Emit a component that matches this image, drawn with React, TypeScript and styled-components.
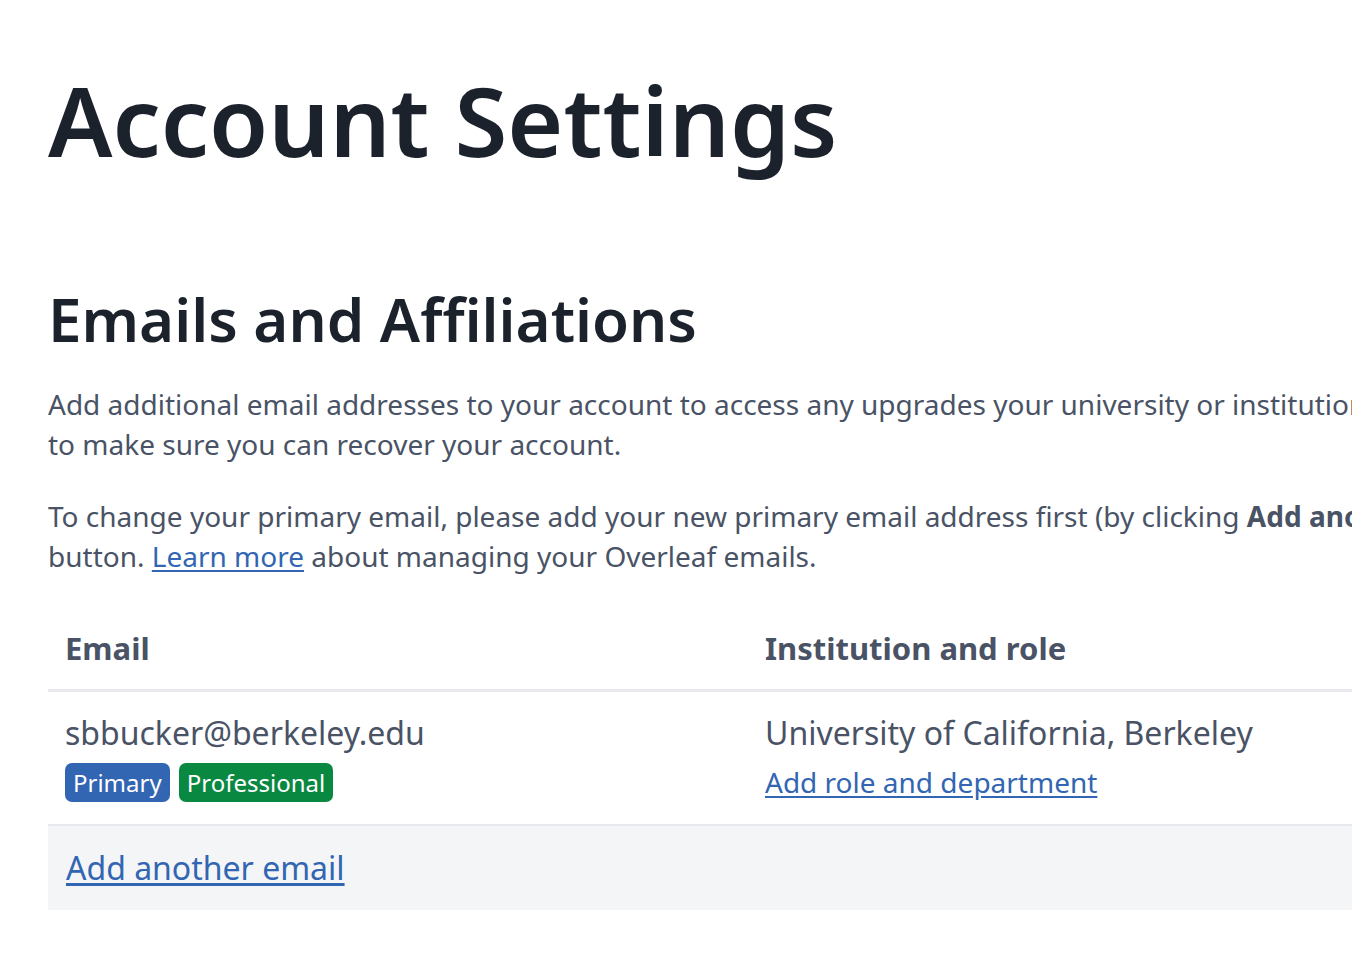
import React from "react";
import styled, { createGlobalStyle } from "styled-components";

const Global = createGlobalStyle`
  html, body { margin: 0; padding: 0; background: #ffffff; overflow: hidden; }
  body { font-family: "Noto Sans", "Open Sans", sans-serif; }
`;

const Page = styled.div`
  width: 2400px;
  padding: 62px 0 0 48px;
  box-sizing: border-box;
  color: #495365;
`;

const Title = styled.h1`
  margin: 0;
  font-size: 96px;
  line-height: 1.2;
  font-weight: 600;
  color: #1b222c;
`;

const SectionTitle = styled.h2`
  margin: 106px 0 0;
  font-size: 60px;
  line-height: 72px;
  font-weight: 600;
  color: #1b222c;
`;

const Paragraph = styled.p`
  margin: 0 0 32px;
  font-size: 28px;
  line-height: 40px;
  color: #495365;
  white-space: nowrap;
  &:first-of-type { margin-top: 29px; }
`;

const Link = styled.a`
  color: #3265b2;
  text-decoration: underline;
  text-underline-offset: 3px;
  cursor: pointer;
`;

const Table = styled.div`
  width: 1900px;
  display: grid;
  grid-template-columns: 700px 1fr;
`;

const HeadCell = styled.div`
  padding: 18px 17px 18px;
  font-size: 31px;
  line-height: 45px;
  font-weight: 700;
  color: #495365;
  border-bottom: 3px solid #e7e9ee;
`;

const Cell = styled.div`
  padding: 18px 17px 22px;
  font-size: 32px;
  line-height: 45px;
  color: #495365;
  border-bottom: 2px solid #e7e9ee;
  display: flex;
  flex-direction: column;
  align-items: flex-start;
  gap: 8px;
`;

const FooterCell = styled.div`
  grid-column: 1 / -1;
  background: #f4f5f6;
  padding: 19px 18px 20px;
  font-size: 32px;
  line-height: 45px;
`;

const Badges = styled.div`
  display: flex;
  gap: 9px;
`;

const Badge = styled.span<{ $tone: "blue" | "green" }>`
  display: inline-flex;
  align-items: center;
  height: 39px;
  padding: 0 8px;
  border-radius: 7px;
  font-size: 24px;
  line-height: 1;
  color: #ffffff;
  background: ${(p) => (p.$tone === "blue" ? "#3265b2" : "#098842")};
`;

const CellLinkLine = styled.div`
  font-size: 28px;
  line-height: 39px;
`;

export default function App() {
  return (
    <>
      <Global />
      <Page>
        <Title>Account Settings</Title>
        <SectionTitle>Emails and Affiliations</SectionTitle>
        <Paragraph>
          Add additional email addresses to your account to access any upgrades your university or institution has, to make it easier for collaborators to find you, and
          <br />
          to make sure you can recover your account.
        </Paragraph>
        <Paragraph>
          To change your primary email, please add your new primary email address first (by clicking <b>Add another email</b>) and confirm it. Then click the <b>Make Primary</b>
          <br />
          button. <Link>Learn more</Link> about managing your Overleaf emails.
        </Paragraph>
        <Table>
          <HeadCell>Email</HeadCell>
          <HeadCell>Institution and role</HeadCell>
          <Cell>
            <span>sbbucker@berkeley.edu</span>
            <Badges>
              <Badge $tone="blue">Primary</Badge>
              <Badge $tone="green">Professional</Badge>
            </Badges>
          </Cell>
          <Cell>
            <span>University of California, Berkeley</span>
            <CellLinkLine>
              <Link>Add role and department</Link>
            </CellLinkLine>
          </Cell>
          <FooterCell>
            <Link>Add another email</Link>
          </FooterCell>
        </Table>
      </Page>
    </>
  );
}
